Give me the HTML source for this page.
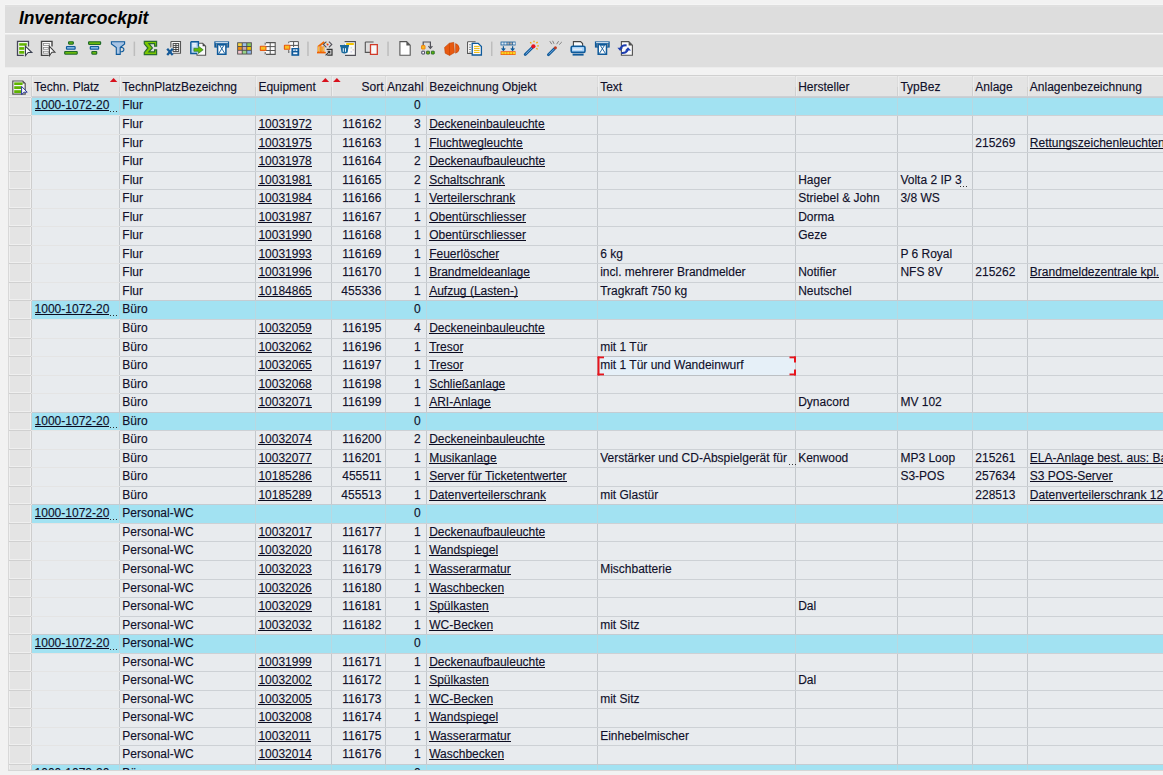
<!DOCTYPE html>
<html><head><meta charset="utf-8"><style>
html,body{margin:0;padding:0;}
body{width:1163px;height:775px;overflow:hidden;position:relative;background:#f2f2f2;font-family:"Liberation Sans",sans-serif;}
.t{position:absolute;font-size:12px;line-height:14px;white-space:nowrap;color:#10102a;-webkit-text-stroke:0.25px rgba(16,16,42,0.6);}
.u{background:linear-gradient(#0c0c20,#0c0c20) 0 12px/100% 1px no-repeat;}
.c1{width:189px;overflow:hidden;}
.dot{position:absolute;width:1px;height:1px;background:#333;}
#title{position:absolute;left:19px;top:8px;font-size:17.5px;line-height:20px;font-weight:bold;font-style:italic;color:#000;white-space:nowrap;}
.ic{position:absolute;width:16px;height:16px;}
#clip{position:absolute;left:0;top:0;width:1163px;height:770px;overflow:hidden;}
</style></head><body>
<svg width="1163" height="775" style="position:absolute;left:0;top:0"><rect x="0" y="0" width="1163" height="775" fill="#f2f2f2"/><rect x="5" y="4.6" width="1158" height="0.7" fill="#fbfbfb"/><rect x="5" y="5.3" width="1158" height="0.9" fill="#d6d6d6"/><rect x="5" y="6.2" width="1158" height="27" fill="#dddddd"/><rect x="5" y="33.2" width="1158" height="1.3" fill="#f9f9f9"/><rect x="5" y="34.5" width="1158" height="32.8" fill="#dedede"/><rect x="8" y="75" width="1155" height="695" fill="#e4e4e4"/><rect x="8" y="75" width="1155" height="1" fill="#d0d0d0"/><rect x="8" y="75" width="1" height="695" fill="#d8d8d8"/><rect x="9" y="76" width="1154" height="1" fill="#ececec"/><rect x="31" y="76" width="1" height="11" fill="#dcdcdc"/><rect x="31" y="87" width="1" height="9" fill="#d0d0d0"/><rect x="32" y="76" width="1" height="20" fill="#ededed"/><rect x="119" y="76" width="1" height="11" fill="#dcdcdc"/><rect x="119" y="87" width="1" height="9" fill="#d0d0d0"/><rect x="120" y="76" width="1" height="20" fill="#ededed"/><rect x="255" y="76" width="1" height="11" fill="#dcdcdc"/><rect x="255" y="87" width="1" height="9" fill="#d0d0d0"/><rect x="256" y="76" width="1" height="20" fill="#ededed"/><rect x="331" y="76" width="1" height="11" fill="#dcdcdc"/><rect x="331" y="87" width="1" height="9" fill="#d0d0d0"/><rect x="332" y="76" width="1" height="20" fill="#ededed"/><rect x="385" y="76" width="1" height="11" fill="#dcdcdc"/><rect x="385" y="87" width="1" height="9" fill="#d0d0d0"/><rect x="386" y="76" width="1" height="20" fill="#ededed"/><rect x="426" y="76" width="1" height="11" fill="#dcdcdc"/><rect x="426" y="87" width="1" height="9" fill="#d0d0d0"/><rect x="427" y="76" width="1" height="20" fill="#ededed"/><rect x="597" y="76" width="1" height="11" fill="#dcdcdc"/><rect x="597" y="87" width="1" height="9" fill="#d0d0d0"/><rect x="598" y="76" width="1" height="20" fill="#ededed"/><rect x="795" y="76" width="1" height="11" fill="#dcdcdc"/><rect x="795" y="87" width="1" height="9" fill="#d0d0d0"/><rect x="796" y="76" width="1" height="20" fill="#ededed"/><rect x="897" y="76" width="1" height="11" fill="#dcdcdc"/><rect x="897" y="87" width="1" height="9" fill="#d0d0d0"/><rect x="898" y="76" width="1" height="20" fill="#ededed"/><rect x="972" y="76" width="1" height="11" fill="#dcdcdc"/><rect x="972" y="87" width="1" height="9" fill="#d0d0d0"/><rect x="973" y="76" width="1" height="20" fill="#ededed"/><rect x="1027" y="76" width="1" height="11" fill="#dcdcdc"/><rect x="1027" y="87" width="1" height="9" fill="#d0d0d0"/><rect x="1028" y="76" width="1" height="20" fill="#ededed"/><rect x="9" y="96" width="1154" height="1" fill="#ccd0d4"/><rect x="32" y="98" width="1131" height="17" fill="#a2e2f2"/><rect x="9" y="97" width="22" height="1" fill="#d0d0d0"/><rect x="9" y="96" width="22" height="1" fill="#efefef"/><rect x="9" y="98" width="1" height="16" fill="#efefef"/><rect x="30" y="98" width="1" height="16" fill="#efefef"/><rect x="32" y="97" width="1131" height="1" fill="#c4ccd2"/><rect x="31" y="98" width="1" height="17" fill="#cdcdcd"/><rect x="119" y="98" width="1" height="17" fill="#b8d8e2"/><rect x="255" y="98" width="1" height="17" fill="#b8d8e2"/><rect x="331" y="98" width="1" height="17" fill="#b8d8e2"/><rect x="385" y="98" width="1" height="17" fill="#b8d8e2"/><rect x="426" y="98" width="1" height="17" fill="#b8d8e2"/><rect x="597" y="98" width="1" height="17" fill="#b8d8e2"/><rect x="795" y="98" width="1" height="17" fill="#b8d8e2"/><rect x="897" y="98" width="1" height="17" fill="#b8d8e2"/><rect x="972" y="98" width="1" height="17" fill="#b8d8e2"/><rect x="1027" y="98" width="1" height="17" fill="#b8d8e2"/><rect x="32" y="116" width="1131" height="18" fill="#e8ebee"/><rect x="9" y="115" width="22" height="1" fill="#d0d0d0"/><rect x="9" y="114" width="22" height="1" fill="#efefef"/><rect x="9" y="116" width="1" height="17" fill="#efefef"/><rect x="30" y="116" width="1" height="17" fill="#efefef"/><rect x="120" y="115" width="1043" height="1" fill="#cdd1d5"/><rect x="31" y="116" width="1" height="18" fill="#cdcdcd"/><rect x="119" y="116" width="1" height="18" fill="#c4c8cc"/><rect x="255" y="116" width="1" height="18" fill="#c4c8cc"/><rect x="331" y="116" width="1" height="18" fill="#c4c8cc"/><rect x="385" y="116" width="1" height="18" fill="#c4c8cc"/><rect x="426" y="116" width="1" height="18" fill="#c4c8cc"/><rect x="597" y="116" width="1" height="18" fill="#c4c8cc"/><rect x="795" y="116" width="1" height="18" fill="#c4c8cc"/><rect x="897" y="116" width="1" height="18" fill="#c4c8cc"/><rect x="972" y="116" width="1" height="18" fill="#c4c8cc"/><rect x="1027" y="116" width="1" height="18" fill="#c4c8cc"/><rect x="32" y="135" width="1131" height="17" fill="#e8ebee"/><rect x="9" y="134" width="22" height="1" fill="#d0d0d0"/><rect x="9" y="133" width="22" height="1" fill="#efefef"/><rect x="9" y="135" width="1" height="16" fill="#efefef"/><rect x="30" y="135" width="1" height="16" fill="#efefef"/><rect x="120" y="134" width="1043" height="1" fill="#cdd1d5"/><rect x="31" y="135" width="1" height="17" fill="#cdcdcd"/><rect x="119" y="135" width="1" height="17" fill="#c4c8cc"/><rect x="255" y="135" width="1" height="17" fill="#c4c8cc"/><rect x="331" y="135" width="1" height="17" fill="#c4c8cc"/><rect x="385" y="135" width="1" height="17" fill="#c4c8cc"/><rect x="426" y="135" width="1" height="17" fill="#c4c8cc"/><rect x="597" y="135" width="1" height="17" fill="#c4c8cc"/><rect x="795" y="135" width="1" height="17" fill="#c4c8cc"/><rect x="897" y="135" width="1" height="17" fill="#c4c8cc"/><rect x="972" y="135" width="1" height="17" fill="#c4c8cc"/><rect x="1027" y="135" width="1" height="17" fill="#c4c8cc"/><rect x="32" y="153" width="1131" height="18" fill="#e8ebee"/><rect x="9" y="152" width="22" height="1" fill="#d0d0d0"/><rect x="9" y="151" width="22" height="1" fill="#efefef"/><rect x="9" y="153" width="1" height="17" fill="#efefef"/><rect x="30" y="153" width="1" height="17" fill="#efefef"/><rect x="120" y="152" width="1043" height="1" fill="#cdd1d5"/><rect x="31" y="153" width="1" height="18" fill="#cdcdcd"/><rect x="119" y="153" width="1" height="18" fill="#c4c8cc"/><rect x="255" y="153" width="1" height="18" fill="#c4c8cc"/><rect x="331" y="153" width="1" height="18" fill="#c4c8cc"/><rect x="385" y="153" width="1" height="18" fill="#c4c8cc"/><rect x="426" y="153" width="1" height="18" fill="#c4c8cc"/><rect x="597" y="153" width="1" height="18" fill="#c4c8cc"/><rect x="795" y="153" width="1" height="18" fill="#c4c8cc"/><rect x="897" y="153" width="1" height="18" fill="#c4c8cc"/><rect x="972" y="153" width="1" height="18" fill="#c4c8cc"/><rect x="1027" y="153" width="1" height="18" fill="#c4c8cc"/><rect x="32" y="172" width="1131" height="17" fill="#e8ebee"/><rect x="9" y="171" width="22" height="1" fill="#d0d0d0"/><rect x="9" y="170" width="22" height="1" fill="#efefef"/><rect x="9" y="172" width="1" height="16" fill="#efefef"/><rect x="30" y="172" width="1" height="16" fill="#efefef"/><rect x="120" y="171" width="1043" height="1" fill="#cdd1d5"/><rect x="31" y="172" width="1" height="17" fill="#cdcdcd"/><rect x="119" y="172" width="1" height="17" fill="#c4c8cc"/><rect x="255" y="172" width="1" height="17" fill="#c4c8cc"/><rect x="331" y="172" width="1" height="17" fill="#c4c8cc"/><rect x="385" y="172" width="1" height="17" fill="#c4c8cc"/><rect x="426" y="172" width="1" height="17" fill="#c4c8cc"/><rect x="597" y="172" width="1" height="17" fill="#c4c8cc"/><rect x="795" y="172" width="1" height="17" fill="#c4c8cc"/><rect x="897" y="172" width="1" height="17" fill="#c4c8cc"/><rect x="972" y="172" width="1" height="17" fill="#c4c8cc"/><rect x="1027" y="172" width="1" height="17" fill="#c4c8cc"/><rect x="32" y="190" width="1131" height="18" fill="#e8ebee"/><rect x="9" y="189" width="22" height="1" fill="#d0d0d0"/><rect x="9" y="188" width="22" height="1" fill="#efefef"/><rect x="9" y="190" width="1" height="17" fill="#efefef"/><rect x="30" y="190" width="1" height="17" fill="#efefef"/><rect x="120" y="189" width="1043" height="1" fill="#cdd1d5"/><rect x="31" y="190" width="1" height="18" fill="#cdcdcd"/><rect x="119" y="190" width="1" height="18" fill="#c4c8cc"/><rect x="255" y="190" width="1" height="18" fill="#c4c8cc"/><rect x="331" y="190" width="1" height="18" fill="#c4c8cc"/><rect x="385" y="190" width="1" height="18" fill="#c4c8cc"/><rect x="426" y="190" width="1" height="18" fill="#c4c8cc"/><rect x="597" y="190" width="1" height="18" fill="#c4c8cc"/><rect x="795" y="190" width="1" height="18" fill="#c4c8cc"/><rect x="897" y="190" width="1" height="18" fill="#c4c8cc"/><rect x="972" y="190" width="1" height="18" fill="#c4c8cc"/><rect x="1027" y="190" width="1" height="18" fill="#c4c8cc"/><rect x="32" y="209" width="1131" height="17" fill="#e8ebee"/><rect x="9" y="208" width="22" height="1" fill="#d0d0d0"/><rect x="9" y="207" width="22" height="1" fill="#efefef"/><rect x="9" y="209" width="1" height="16" fill="#efefef"/><rect x="30" y="209" width="1" height="16" fill="#efefef"/><rect x="120" y="208" width="1043" height="1" fill="#cdd1d5"/><rect x="31" y="209" width="1" height="17" fill="#cdcdcd"/><rect x="119" y="209" width="1" height="17" fill="#c4c8cc"/><rect x="255" y="209" width="1" height="17" fill="#c4c8cc"/><rect x="331" y="209" width="1" height="17" fill="#c4c8cc"/><rect x="385" y="209" width="1" height="17" fill="#c4c8cc"/><rect x="426" y="209" width="1" height="17" fill="#c4c8cc"/><rect x="597" y="209" width="1" height="17" fill="#c4c8cc"/><rect x="795" y="209" width="1" height="17" fill="#c4c8cc"/><rect x="897" y="209" width="1" height="17" fill="#c4c8cc"/><rect x="972" y="209" width="1" height="17" fill="#c4c8cc"/><rect x="1027" y="209" width="1" height="17" fill="#c4c8cc"/><rect x="32" y="227" width="1131" height="18" fill="#e8ebee"/><rect x="9" y="226" width="22" height="1" fill="#d0d0d0"/><rect x="9" y="225" width="22" height="1" fill="#efefef"/><rect x="9" y="227" width="1" height="17" fill="#efefef"/><rect x="30" y="227" width="1" height="17" fill="#efefef"/><rect x="120" y="226" width="1043" height="1" fill="#cdd1d5"/><rect x="31" y="227" width="1" height="18" fill="#cdcdcd"/><rect x="119" y="227" width="1" height="18" fill="#c4c8cc"/><rect x="255" y="227" width="1" height="18" fill="#c4c8cc"/><rect x="331" y="227" width="1" height="18" fill="#c4c8cc"/><rect x="385" y="227" width="1" height="18" fill="#c4c8cc"/><rect x="426" y="227" width="1" height="18" fill="#c4c8cc"/><rect x="597" y="227" width="1" height="18" fill="#c4c8cc"/><rect x="795" y="227" width="1" height="18" fill="#c4c8cc"/><rect x="897" y="227" width="1" height="18" fill="#c4c8cc"/><rect x="972" y="227" width="1" height="18" fill="#c4c8cc"/><rect x="1027" y="227" width="1" height="18" fill="#c4c8cc"/><rect x="32" y="246" width="1131" height="17" fill="#e8ebee"/><rect x="9" y="245" width="22" height="1" fill="#d0d0d0"/><rect x="9" y="244" width="22" height="1" fill="#efefef"/><rect x="9" y="246" width="1" height="16" fill="#efefef"/><rect x="30" y="246" width="1" height="16" fill="#efefef"/><rect x="120" y="245" width="1043" height="1" fill="#cdd1d5"/><rect x="31" y="246" width="1" height="17" fill="#cdcdcd"/><rect x="119" y="246" width="1" height="17" fill="#c4c8cc"/><rect x="255" y="246" width="1" height="17" fill="#c4c8cc"/><rect x="331" y="246" width="1" height="17" fill="#c4c8cc"/><rect x="385" y="246" width="1" height="17" fill="#c4c8cc"/><rect x="426" y="246" width="1" height="17" fill="#c4c8cc"/><rect x="597" y="246" width="1" height="17" fill="#c4c8cc"/><rect x="795" y="246" width="1" height="17" fill="#c4c8cc"/><rect x="897" y="246" width="1" height="17" fill="#c4c8cc"/><rect x="972" y="246" width="1" height="17" fill="#c4c8cc"/><rect x="1027" y="246" width="1" height="17" fill="#c4c8cc"/><rect x="32" y="264" width="1131" height="18" fill="#e8ebee"/><rect x="9" y="263" width="22" height="1" fill="#d0d0d0"/><rect x="9" y="262" width="22" height="1" fill="#efefef"/><rect x="9" y="264" width="1" height="17" fill="#efefef"/><rect x="30" y="264" width="1" height="17" fill="#efefef"/><rect x="120" y="263" width="1043" height="1" fill="#cdd1d5"/><rect x="31" y="264" width="1" height="18" fill="#cdcdcd"/><rect x="119" y="264" width="1" height="18" fill="#c4c8cc"/><rect x="255" y="264" width="1" height="18" fill="#c4c8cc"/><rect x="331" y="264" width="1" height="18" fill="#c4c8cc"/><rect x="385" y="264" width="1" height="18" fill="#c4c8cc"/><rect x="426" y="264" width="1" height="18" fill="#c4c8cc"/><rect x="597" y="264" width="1" height="18" fill="#c4c8cc"/><rect x="795" y="264" width="1" height="18" fill="#c4c8cc"/><rect x="897" y="264" width="1" height="18" fill="#c4c8cc"/><rect x="972" y="264" width="1" height="18" fill="#c4c8cc"/><rect x="1027" y="264" width="1" height="18" fill="#c4c8cc"/><rect x="32" y="283" width="1131" height="17" fill="#e8ebee"/><rect x="9" y="282" width="22" height="1" fill="#d0d0d0"/><rect x="9" y="281" width="22" height="1" fill="#efefef"/><rect x="9" y="283" width="1" height="16" fill="#efefef"/><rect x="30" y="283" width="1" height="16" fill="#efefef"/><rect x="120" y="282" width="1043" height="1" fill="#cdd1d5"/><rect x="31" y="283" width="1" height="17" fill="#cdcdcd"/><rect x="119" y="283" width="1" height="17" fill="#c4c8cc"/><rect x="255" y="283" width="1" height="17" fill="#c4c8cc"/><rect x="331" y="283" width="1" height="17" fill="#c4c8cc"/><rect x="385" y="283" width="1" height="17" fill="#c4c8cc"/><rect x="426" y="283" width="1" height="17" fill="#c4c8cc"/><rect x="597" y="283" width="1" height="17" fill="#c4c8cc"/><rect x="795" y="283" width="1" height="17" fill="#c4c8cc"/><rect x="897" y="283" width="1" height="17" fill="#c4c8cc"/><rect x="972" y="283" width="1" height="17" fill="#c4c8cc"/><rect x="1027" y="283" width="1" height="17" fill="#c4c8cc"/><rect x="32" y="301" width="1131" height="18" fill="#a2e2f2"/><rect x="9" y="300" width="22" height="1" fill="#d0d0d0"/><rect x="9" y="299" width="22" height="1" fill="#efefef"/><rect x="9" y="301" width="1" height="17" fill="#efefef"/><rect x="30" y="301" width="1" height="17" fill="#efefef"/><rect x="32" y="300" width="1131" height="1" fill="#c4ccd2"/><rect x="31" y="301" width="1" height="18" fill="#cdcdcd"/><rect x="119" y="301" width="1" height="18" fill="#b8d8e2"/><rect x="255" y="301" width="1" height="18" fill="#b8d8e2"/><rect x="331" y="301" width="1" height="18" fill="#b8d8e2"/><rect x="385" y="301" width="1" height="18" fill="#b8d8e2"/><rect x="426" y="301" width="1" height="18" fill="#b8d8e2"/><rect x="597" y="301" width="1" height="18" fill="#b8d8e2"/><rect x="795" y="301" width="1" height="18" fill="#b8d8e2"/><rect x="897" y="301" width="1" height="18" fill="#b8d8e2"/><rect x="972" y="301" width="1" height="18" fill="#b8d8e2"/><rect x="1027" y="301" width="1" height="18" fill="#b8d8e2"/><rect x="32" y="320" width="1131" height="18" fill="#e8ebee"/><rect x="9" y="319" width="22" height="1" fill="#d0d0d0"/><rect x="9" y="318" width="22" height="1" fill="#efefef"/><rect x="9" y="320" width="1" height="17" fill="#efefef"/><rect x="30" y="320" width="1" height="17" fill="#efefef"/><rect x="120" y="319" width="1043" height="1" fill="#cdd1d5"/><rect x="31" y="320" width="1" height="18" fill="#cdcdcd"/><rect x="119" y="320" width="1" height="18" fill="#c4c8cc"/><rect x="255" y="320" width="1" height="18" fill="#c4c8cc"/><rect x="331" y="320" width="1" height="18" fill="#c4c8cc"/><rect x="385" y="320" width="1" height="18" fill="#c4c8cc"/><rect x="426" y="320" width="1" height="18" fill="#c4c8cc"/><rect x="597" y="320" width="1" height="18" fill="#c4c8cc"/><rect x="795" y="320" width="1" height="18" fill="#c4c8cc"/><rect x="897" y="320" width="1" height="18" fill="#c4c8cc"/><rect x="972" y="320" width="1" height="18" fill="#c4c8cc"/><rect x="1027" y="320" width="1" height="18" fill="#c4c8cc"/><rect x="32" y="339" width="1131" height="17" fill="#e8ebee"/><rect x="9" y="338" width="22" height="1" fill="#d0d0d0"/><rect x="9" y="337" width="22" height="1" fill="#efefef"/><rect x="9" y="339" width="1" height="16" fill="#efefef"/><rect x="30" y="339" width="1" height="16" fill="#efefef"/><rect x="120" y="338" width="1043" height="1" fill="#cdd1d5"/><rect x="31" y="339" width="1" height="17" fill="#cdcdcd"/><rect x="119" y="339" width="1" height="17" fill="#c4c8cc"/><rect x="255" y="339" width="1" height="17" fill="#c4c8cc"/><rect x="331" y="339" width="1" height="17" fill="#c4c8cc"/><rect x="385" y="339" width="1" height="17" fill="#c4c8cc"/><rect x="426" y="339" width="1" height="17" fill="#c4c8cc"/><rect x="597" y="339" width="1" height="17" fill="#c4c8cc"/><rect x="795" y="339" width="1" height="17" fill="#c4c8cc"/><rect x="897" y="339" width="1" height="17" fill="#c4c8cc"/><rect x="972" y="339" width="1" height="17" fill="#c4c8cc"/><rect x="1027" y="339" width="1" height="17" fill="#c4c8cc"/><rect x="32" y="357" width="1131" height="18" fill="#e8ebee"/><rect x="9" y="356" width="22" height="1" fill="#d0d0d0"/><rect x="9" y="355" width="22" height="1" fill="#efefef"/><rect x="9" y="357" width="1" height="17" fill="#efefef"/><rect x="30" y="357" width="1" height="17" fill="#efefef"/><rect x="120" y="356" width="1043" height="1" fill="#cdd1d5"/><rect x="31" y="357" width="1" height="18" fill="#cdcdcd"/><rect x="119" y="357" width="1" height="18" fill="#c4c8cc"/><rect x="255" y="357" width="1" height="18" fill="#c4c8cc"/><rect x="331" y="357" width="1" height="18" fill="#c4c8cc"/><rect x="385" y="357" width="1" height="18" fill="#c4c8cc"/><rect x="426" y="357" width="1" height="18" fill="#c4c8cc"/><rect x="597" y="357" width="1" height="18" fill="#c4c8cc"/><rect x="795" y="357" width="1" height="18" fill="#c4c8cc"/><rect x="897" y="357" width="1" height="18" fill="#c4c8cc"/><rect x="972" y="357" width="1" height="18" fill="#c4c8cc"/><rect x="1027" y="357" width="1" height="18" fill="#c4c8cc"/><rect x="32" y="376" width="1131" height="17" fill="#e8ebee"/><rect x="9" y="375" width="22" height="1" fill="#d0d0d0"/><rect x="9" y="374" width="22" height="1" fill="#efefef"/><rect x="9" y="376" width="1" height="16" fill="#efefef"/><rect x="30" y="376" width="1" height="16" fill="#efefef"/><rect x="120" y="375" width="1043" height="1" fill="#cdd1d5"/><rect x="31" y="376" width="1" height="17" fill="#cdcdcd"/><rect x="119" y="376" width="1" height="17" fill="#c4c8cc"/><rect x="255" y="376" width="1" height="17" fill="#c4c8cc"/><rect x="331" y="376" width="1" height="17" fill="#c4c8cc"/><rect x="385" y="376" width="1" height="17" fill="#c4c8cc"/><rect x="426" y="376" width="1" height="17" fill="#c4c8cc"/><rect x="597" y="376" width="1" height="17" fill="#c4c8cc"/><rect x="795" y="376" width="1" height="17" fill="#c4c8cc"/><rect x="897" y="376" width="1" height="17" fill="#c4c8cc"/><rect x="972" y="376" width="1" height="17" fill="#c4c8cc"/><rect x="1027" y="376" width="1" height="17" fill="#c4c8cc"/><rect x="32" y="394" width="1131" height="18" fill="#e8ebee"/><rect x="9" y="393" width="22" height="1" fill="#d0d0d0"/><rect x="9" y="392" width="22" height="1" fill="#efefef"/><rect x="9" y="394" width="1" height="17" fill="#efefef"/><rect x="30" y="394" width="1" height="17" fill="#efefef"/><rect x="120" y="393" width="1043" height="1" fill="#cdd1d5"/><rect x="31" y="394" width="1" height="18" fill="#cdcdcd"/><rect x="119" y="394" width="1" height="18" fill="#c4c8cc"/><rect x="255" y="394" width="1" height="18" fill="#c4c8cc"/><rect x="331" y="394" width="1" height="18" fill="#c4c8cc"/><rect x="385" y="394" width="1" height="18" fill="#c4c8cc"/><rect x="426" y="394" width="1" height="18" fill="#c4c8cc"/><rect x="597" y="394" width="1" height="18" fill="#c4c8cc"/><rect x="795" y="394" width="1" height="18" fill="#c4c8cc"/><rect x="897" y="394" width="1" height="18" fill="#c4c8cc"/><rect x="972" y="394" width="1" height="18" fill="#c4c8cc"/><rect x="1027" y="394" width="1" height="18" fill="#c4c8cc"/><rect x="32" y="413" width="1131" height="17" fill="#a2e2f2"/><rect x="9" y="412" width="22" height="1" fill="#d0d0d0"/><rect x="9" y="411" width="22" height="1" fill="#efefef"/><rect x="9" y="413" width="1" height="16" fill="#efefef"/><rect x="30" y="413" width="1" height="16" fill="#efefef"/><rect x="32" y="412" width="1131" height="1" fill="#c4ccd2"/><rect x="31" y="413" width="1" height="17" fill="#cdcdcd"/><rect x="119" y="413" width="1" height="17" fill="#b8d8e2"/><rect x="255" y="413" width="1" height="17" fill="#b8d8e2"/><rect x="331" y="413" width="1" height="17" fill="#b8d8e2"/><rect x="385" y="413" width="1" height="17" fill="#b8d8e2"/><rect x="426" y="413" width="1" height="17" fill="#b8d8e2"/><rect x="597" y="413" width="1" height="17" fill="#b8d8e2"/><rect x="795" y="413" width="1" height="17" fill="#b8d8e2"/><rect x="897" y="413" width="1" height="17" fill="#b8d8e2"/><rect x="972" y="413" width="1" height="17" fill="#b8d8e2"/><rect x="1027" y="413" width="1" height="17" fill="#b8d8e2"/><rect x="32" y="431" width="1131" height="18" fill="#e8ebee"/><rect x="9" y="430" width="22" height="1" fill="#d0d0d0"/><rect x="9" y="429" width="22" height="1" fill="#efefef"/><rect x="9" y="431" width="1" height="17" fill="#efefef"/><rect x="30" y="431" width="1" height="17" fill="#efefef"/><rect x="120" y="430" width="1043" height="1" fill="#cdd1d5"/><rect x="31" y="431" width="1" height="18" fill="#cdcdcd"/><rect x="119" y="431" width="1" height="18" fill="#c4c8cc"/><rect x="255" y="431" width="1" height="18" fill="#c4c8cc"/><rect x="331" y="431" width="1" height="18" fill="#c4c8cc"/><rect x="385" y="431" width="1" height="18" fill="#c4c8cc"/><rect x="426" y="431" width="1" height="18" fill="#c4c8cc"/><rect x="597" y="431" width="1" height="18" fill="#c4c8cc"/><rect x="795" y="431" width="1" height="18" fill="#c4c8cc"/><rect x="897" y="431" width="1" height="18" fill="#c4c8cc"/><rect x="972" y="431" width="1" height="18" fill="#c4c8cc"/><rect x="1027" y="431" width="1" height="18" fill="#c4c8cc"/><rect x="32" y="450" width="1131" height="17" fill="#e8ebee"/><rect x="9" y="449" width="22" height="1" fill="#d0d0d0"/><rect x="9" y="448" width="22" height="1" fill="#efefef"/><rect x="9" y="450" width="1" height="16" fill="#efefef"/><rect x="30" y="450" width="1" height="16" fill="#efefef"/><rect x="120" y="449" width="1043" height="1" fill="#cdd1d5"/><rect x="31" y="450" width="1" height="17" fill="#cdcdcd"/><rect x="119" y="450" width="1" height="17" fill="#c4c8cc"/><rect x="255" y="450" width="1" height="17" fill="#c4c8cc"/><rect x="331" y="450" width="1" height="17" fill="#c4c8cc"/><rect x="385" y="450" width="1" height="17" fill="#c4c8cc"/><rect x="426" y="450" width="1" height="17" fill="#c4c8cc"/><rect x="597" y="450" width="1" height="17" fill="#c4c8cc"/><rect x="795" y="450" width="1" height="17" fill="#c4c8cc"/><rect x="897" y="450" width="1" height="17" fill="#c4c8cc"/><rect x="972" y="450" width="1" height="17" fill="#c4c8cc"/><rect x="1027" y="450" width="1" height="17" fill="#c4c8cc"/><rect x="32" y="468" width="1131" height="18" fill="#e8ebee"/><rect x="9" y="467" width="22" height="1" fill="#d0d0d0"/><rect x="9" y="466" width="22" height="1" fill="#efefef"/><rect x="9" y="468" width="1" height="17" fill="#efefef"/><rect x="30" y="468" width="1" height="17" fill="#efefef"/><rect x="120" y="467" width="1043" height="1" fill="#cdd1d5"/><rect x="31" y="468" width="1" height="18" fill="#cdcdcd"/><rect x="119" y="468" width="1" height="18" fill="#c4c8cc"/><rect x="255" y="468" width="1" height="18" fill="#c4c8cc"/><rect x="331" y="468" width="1" height="18" fill="#c4c8cc"/><rect x="385" y="468" width="1" height="18" fill="#c4c8cc"/><rect x="426" y="468" width="1" height="18" fill="#c4c8cc"/><rect x="597" y="468" width="1" height="18" fill="#c4c8cc"/><rect x="795" y="468" width="1" height="18" fill="#c4c8cc"/><rect x="897" y="468" width="1" height="18" fill="#c4c8cc"/><rect x="972" y="468" width="1" height="18" fill="#c4c8cc"/><rect x="1027" y="468" width="1" height="18" fill="#c4c8cc"/><rect x="32" y="487" width="1131" height="17" fill="#e8ebee"/><rect x="9" y="486" width="22" height="1" fill="#d0d0d0"/><rect x="9" y="485" width="22" height="1" fill="#efefef"/><rect x="9" y="487" width="1" height="16" fill="#efefef"/><rect x="30" y="487" width="1" height="16" fill="#efefef"/><rect x="120" y="486" width="1043" height="1" fill="#cdd1d5"/><rect x="31" y="487" width="1" height="17" fill="#cdcdcd"/><rect x="119" y="487" width="1" height="17" fill="#c4c8cc"/><rect x="255" y="487" width="1" height="17" fill="#c4c8cc"/><rect x="331" y="487" width="1" height="17" fill="#c4c8cc"/><rect x="385" y="487" width="1" height="17" fill="#c4c8cc"/><rect x="426" y="487" width="1" height="17" fill="#c4c8cc"/><rect x="597" y="487" width="1" height="17" fill="#c4c8cc"/><rect x="795" y="487" width="1" height="17" fill="#c4c8cc"/><rect x="897" y="487" width="1" height="17" fill="#c4c8cc"/><rect x="972" y="487" width="1" height="17" fill="#c4c8cc"/><rect x="1027" y="487" width="1" height="17" fill="#c4c8cc"/><rect x="32" y="505" width="1131" height="18" fill="#a2e2f2"/><rect x="9" y="504" width="22" height="1" fill="#d0d0d0"/><rect x="9" y="503" width="22" height="1" fill="#efefef"/><rect x="9" y="505" width="1" height="17" fill="#efefef"/><rect x="30" y="505" width="1" height="17" fill="#efefef"/><rect x="32" y="504" width="1131" height="1" fill="#c4ccd2"/><rect x="31" y="505" width="1" height="18" fill="#cdcdcd"/><rect x="119" y="505" width="1" height="18" fill="#b8d8e2"/><rect x="255" y="505" width="1" height="18" fill="#b8d8e2"/><rect x="331" y="505" width="1" height="18" fill="#b8d8e2"/><rect x="385" y="505" width="1" height="18" fill="#b8d8e2"/><rect x="426" y="505" width="1" height="18" fill="#b8d8e2"/><rect x="597" y="505" width="1" height="18" fill="#b8d8e2"/><rect x="795" y="505" width="1" height="18" fill="#b8d8e2"/><rect x="897" y="505" width="1" height="18" fill="#b8d8e2"/><rect x="972" y="505" width="1" height="18" fill="#b8d8e2"/><rect x="1027" y="505" width="1" height="18" fill="#b8d8e2"/><rect x="32" y="524" width="1131" height="17" fill="#e8ebee"/><rect x="9" y="523" width="22" height="1" fill="#d0d0d0"/><rect x="9" y="522" width="22" height="1" fill="#efefef"/><rect x="9" y="524" width="1" height="16" fill="#efefef"/><rect x="30" y="524" width="1" height="16" fill="#efefef"/><rect x="120" y="523" width="1043" height="1" fill="#cdd1d5"/><rect x="31" y="524" width="1" height="17" fill="#cdcdcd"/><rect x="119" y="524" width="1" height="17" fill="#c4c8cc"/><rect x="255" y="524" width="1" height="17" fill="#c4c8cc"/><rect x="331" y="524" width="1" height="17" fill="#c4c8cc"/><rect x="385" y="524" width="1" height="17" fill="#c4c8cc"/><rect x="426" y="524" width="1" height="17" fill="#c4c8cc"/><rect x="597" y="524" width="1" height="17" fill="#c4c8cc"/><rect x="795" y="524" width="1" height="17" fill="#c4c8cc"/><rect x="897" y="524" width="1" height="17" fill="#c4c8cc"/><rect x="972" y="524" width="1" height="17" fill="#c4c8cc"/><rect x="1027" y="524" width="1" height="17" fill="#c4c8cc"/><rect x="32" y="542" width="1131" height="18" fill="#e8ebee"/><rect x="9" y="541" width="22" height="1" fill="#d0d0d0"/><rect x="9" y="540" width="22" height="1" fill="#efefef"/><rect x="9" y="542" width="1" height="17" fill="#efefef"/><rect x="30" y="542" width="1" height="17" fill="#efefef"/><rect x="120" y="541" width="1043" height="1" fill="#cdd1d5"/><rect x="31" y="542" width="1" height="18" fill="#cdcdcd"/><rect x="119" y="542" width="1" height="18" fill="#c4c8cc"/><rect x="255" y="542" width="1" height="18" fill="#c4c8cc"/><rect x="331" y="542" width="1" height="18" fill="#c4c8cc"/><rect x="385" y="542" width="1" height="18" fill="#c4c8cc"/><rect x="426" y="542" width="1" height="18" fill="#c4c8cc"/><rect x="597" y="542" width="1" height="18" fill="#c4c8cc"/><rect x="795" y="542" width="1" height="18" fill="#c4c8cc"/><rect x="897" y="542" width="1" height="18" fill="#c4c8cc"/><rect x="972" y="542" width="1" height="18" fill="#c4c8cc"/><rect x="1027" y="542" width="1" height="18" fill="#c4c8cc"/><rect x="32" y="561" width="1131" height="18" fill="#e8ebee"/><rect x="9" y="560" width="22" height="1" fill="#d0d0d0"/><rect x="9" y="559" width="22" height="1" fill="#efefef"/><rect x="9" y="561" width="1" height="17" fill="#efefef"/><rect x="30" y="561" width="1" height="17" fill="#efefef"/><rect x="120" y="560" width="1043" height="1" fill="#cdd1d5"/><rect x="31" y="561" width="1" height="18" fill="#cdcdcd"/><rect x="119" y="561" width="1" height="18" fill="#c4c8cc"/><rect x="255" y="561" width="1" height="18" fill="#c4c8cc"/><rect x="331" y="561" width="1" height="18" fill="#c4c8cc"/><rect x="385" y="561" width="1" height="18" fill="#c4c8cc"/><rect x="426" y="561" width="1" height="18" fill="#c4c8cc"/><rect x="597" y="561" width="1" height="18" fill="#c4c8cc"/><rect x="795" y="561" width="1" height="18" fill="#c4c8cc"/><rect x="897" y="561" width="1" height="18" fill="#c4c8cc"/><rect x="972" y="561" width="1" height="18" fill="#c4c8cc"/><rect x="1027" y="561" width="1" height="18" fill="#c4c8cc"/><rect x="32" y="580" width="1131" height="17" fill="#e8ebee"/><rect x="9" y="579" width="22" height="1" fill="#d0d0d0"/><rect x="9" y="578" width="22" height="1" fill="#efefef"/><rect x="9" y="580" width="1" height="16" fill="#efefef"/><rect x="30" y="580" width="1" height="16" fill="#efefef"/><rect x="120" y="579" width="1043" height="1" fill="#cdd1d5"/><rect x="31" y="580" width="1" height="17" fill="#cdcdcd"/><rect x="119" y="580" width="1" height="17" fill="#c4c8cc"/><rect x="255" y="580" width="1" height="17" fill="#c4c8cc"/><rect x="331" y="580" width="1" height="17" fill="#c4c8cc"/><rect x="385" y="580" width="1" height="17" fill="#c4c8cc"/><rect x="426" y="580" width="1" height="17" fill="#c4c8cc"/><rect x="597" y="580" width="1" height="17" fill="#c4c8cc"/><rect x="795" y="580" width="1" height="17" fill="#c4c8cc"/><rect x="897" y="580" width="1" height="17" fill="#c4c8cc"/><rect x="972" y="580" width="1" height="17" fill="#c4c8cc"/><rect x="1027" y="580" width="1" height="17" fill="#c4c8cc"/><rect x="32" y="598" width="1131" height="18" fill="#e8ebee"/><rect x="9" y="597" width="22" height="1" fill="#d0d0d0"/><rect x="9" y="596" width="22" height="1" fill="#efefef"/><rect x="9" y="598" width="1" height="17" fill="#efefef"/><rect x="30" y="598" width="1" height="17" fill="#efefef"/><rect x="120" y="597" width="1043" height="1" fill="#cdd1d5"/><rect x="31" y="598" width="1" height="18" fill="#cdcdcd"/><rect x="119" y="598" width="1" height="18" fill="#c4c8cc"/><rect x="255" y="598" width="1" height="18" fill="#c4c8cc"/><rect x="331" y="598" width="1" height="18" fill="#c4c8cc"/><rect x="385" y="598" width="1" height="18" fill="#c4c8cc"/><rect x="426" y="598" width="1" height="18" fill="#c4c8cc"/><rect x="597" y="598" width="1" height="18" fill="#c4c8cc"/><rect x="795" y="598" width="1" height="18" fill="#c4c8cc"/><rect x="897" y="598" width="1" height="18" fill="#c4c8cc"/><rect x="972" y="598" width="1" height="18" fill="#c4c8cc"/><rect x="1027" y="598" width="1" height="18" fill="#c4c8cc"/><rect x="32" y="617" width="1131" height="17" fill="#e8ebee"/><rect x="9" y="616" width="22" height="1" fill="#d0d0d0"/><rect x="9" y="615" width="22" height="1" fill="#efefef"/><rect x="9" y="617" width="1" height="16" fill="#efefef"/><rect x="30" y="617" width="1" height="16" fill="#efefef"/><rect x="120" y="616" width="1043" height="1" fill="#cdd1d5"/><rect x="31" y="617" width="1" height="17" fill="#cdcdcd"/><rect x="119" y="617" width="1" height="17" fill="#c4c8cc"/><rect x="255" y="617" width="1" height="17" fill="#c4c8cc"/><rect x="331" y="617" width="1" height="17" fill="#c4c8cc"/><rect x="385" y="617" width="1" height="17" fill="#c4c8cc"/><rect x="426" y="617" width="1" height="17" fill="#c4c8cc"/><rect x="597" y="617" width="1" height="17" fill="#c4c8cc"/><rect x="795" y="617" width="1" height="17" fill="#c4c8cc"/><rect x="897" y="617" width="1" height="17" fill="#c4c8cc"/><rect x="972" y="617" width="1" height="17" fill="#c4c8cc"/><rect x="1027" y="617" width="1" height="17" fill="#c4c8cc"/><rect x="32" y="635" width="1131" height="18" fill="#a2e2f2"/><rect x="9" y="634" width="22" height="1" fill="#d0d0d0"/><rect x="9" y="633" width="22" height="1" fill="#efefef"/><rect x="9" y="635" width="1" height="17" fill="#efefef"/><rect x="30" y="635" width="1" height="17" fill="#efefef"/><rect x="32" y="634" width="1131" height="1" fill="#c4ccd2"/><rect x="31" y="635" width="1" height="18" fill="#cdcdcd"/><rect x="119" y="635" width="1" height="18" fill="#b8d8e2"/><rect x="255" y="635" width="1" height="18" fill="#b8d8e2"/><rect x="331" y="635" width="1" height="18" fill="#b8d8e2"/><rect x="385" y="635" width="1" height="18" fill="#b8d8e2"/><rect x="426" y="635" width="1" height="18" fill="#b8d8e2"/><rect x="597" y="635" width="1" height="18" fill="#b8d8e2"/><rect x="795" y="635" width="1" height="18" fill="#b8d8e2"/><rect x="897" y="635" width="1" height="18" fill="#b8d8e2"/><rect x="972" y="635" width="1" height="18" fill="#b8d8e2"/><rect x="1027" y="635" width="1" height="18" fill="#b8d8e2"/><rect x="32" y="654" width="1131" height="17" fill="#e8ebee"/><rect x="9" y="653" width="22" height="1" fill="#d0d0d0"/><rect x="9" y="652" width="22" height="1" fill="#efefef"/><rect x="9" y="654" width="1" height="16" fill="#efefef"/><rect x="30" y="654" width="1" height="16" fill="#efefef"/><rect x="120" y="653" width="1043" height="1" fill="#cdd1d5"/><rect x="31" y="654" width="1" height="17" fill="#cdcdcd"/><rect x="119" y="654" width="1" height="17" fill="#c4c8cc"/><rect x="255" y="654" width="1" height="17" fill="#c4c8cc"/><rect x="331" y="654" width="1" height="17" fill="#c4c8cc"/><rect x="385" y="654" width="1" height="17" fill="#c4c8cc"/><rect x="426" y="654" width="1" height="17" fill="#c4c8cc"/><rect x="597" y="654" width="1" height="17" fill="#c4c8cc"/><rect x="795" y="654" width="1" height="17" fill="#c4c8cc"/><rect x="897" y="654" width="1" height="17" fill="#c4c8cc"/><rect x="972" y="654" width="1" height="17" fill="#c4c8cc"/><rect x="1027" y="654" width="1" height="17" fill="#c4c8cc"/><rect x="32" y="672" width="1131" height="18" fill="#e8ebee"/><rect x="9" y="671" width="22" height="1" fill="#d0d0d0"/><rect x="9" y="670" width="22" height="1" fill="#efefef"/><rect x="9" y="672" width="1" height="17" fill="#efefef"/><rect x="30" y="672" width="1" height="17" fill="#efefef"/><rect x="120" y="671" width="1043" height="1" fill="#cdd1d5"/><rect x="31" y="672" width="1" height="18" fill="#cdcdcd"/><rect x="119" y="672" width="1" height="18" fill="#c4c8cc"/><rect x="255" y="672" width="1" height="18" fill="#c4c8cc"/><rect x="331" y="672" width="1" height="18" fill="#c4c8cc"/><rect x="385" y="672" width="1" height="18" fill="#c4c8cc"/><rect x="426" y="672" width="1" height="18" fill="#c4c8cc"/><rect x="597" y="672" width="1" height="18" fill="#c4c8cc"/><rect x="795" y="672" width="1" height="18" fill="#c4c8cc"/><rect x="897" y="672" width="1" height="18" fill="#c4c8cc"/><rect x="972" y="672" width="1" height="18" fill="#c4c8cc"/><rect x="1027" y="672" width="1" height="18" fill="#c4c8cc"/><rect x="32" y="691" width="1131" height="17" fill="#e8ebee"/><rect x="9" y="690" width="22" height="1" fill="#d0d0d0"/><rect x="9" y="689" width="22" height="1" fill="#efefef"/><rect x="9" y="691" width="1" height="16" fill="#efefef"/><rect x="30" y="691" width="1" height="16" fill="#efefef"/><rect x="120" y="690" width="1043" height="1" fill="#cdd1d5"/><rect x="31" y="691" width="1" height="17" fill="#cdcdcd"/><rect x="119" y="691" width="1" height="17" fill="#c4c8cc"/><rect x="255" y="691" width="1" height="17" fill="#c4c8cc"/><rect x="331" y="691" width="1" height="17" fill="#c4c8cc"/><rect x="385" y="691" width="1" height="17" fill="#c4c8cc"/><rect x="426" y="691" width="1" height="17" fill="#c4c8cc"/><rect x="597" y="691" width="1" height="17" fill="#c4c8cc"/><rect x="795" y="691" width="1" height="17" fill="#c4c8cc"/><rect x="897" y="691" width="1" height="17" fill="#c4c8cc"/><rect x="972" y="691" width="1" height="17" fill="#c4c8cc"/><rect x="1027" y="691" width="1" height="17" fill="#c4c8cc"/><rect x="32" y="709" width="1131" height="18" fill="#e8ebee"/><rect x="9" y="708" width="22" height="1" fill="#d0d0d0"/><rect x="9" y="707" width="22" height="1" fill="#efefef"/><rect x="9" y="709" width="1" height="17" fill="#efefef"/><rect x="30" y="709" width="1" height="17" fill="#efefef"/><rect x="120" y="708" width="1043" height="1" fill="#cdd1d5"/><rect x="31" y="709" width="1" height="18" fill="#cdcdcd"/><rect x="119" y="709" width="1" height="18" fill="#c4c8cc"/><rect x="255" y="709" width="1" height="18" fill="#c4c8cc"/><rect x="331" y="709" width="1" height="18" fill="#c4c8cc"/><rect x="385" y="709" width="1" height="18" fill="#c4c8cc"/><rect x="426" y="709" width="1" height="18" fill="#c4c8cc"/><rect x="597" y="709" width="1" height="18" fill="#c4c8cc"/><rect x="795" y="709" width="1" height="18" fill="#c4c8cc"/><rect x="897" y="709" width="1" height="18" fill="#c4c8cc"/><rect x="972" y="709" width="1" height="18" fill="#c4c8cc"/><rect x="1027" y="709" width="1" height="18" fill="#c4c8cc"/><rect x="32" y="728" width="1131" height="17" fill="#e8ebee"/><rect x="9" y="727" width="22" height="1" fill="#d0d0d0"/><rect x="9" y="726" width="22" height="1" fill="#efefef"/><rect x="9" y="728" width="1" height="16" fill="#efefef"/><rect x="30" y="728" width="1" height="16" fill="#efefef"/><rect x="120" y="727" width="1043" height="1" fill="#cdd1d5"/><rect x="31" y="728" width="1" height="17" fill="#cdcdcd"/><rect x="119" y="728" width="1" height="17" fill="#c4c8cc"/><rect x="255" y="728" width="1" height="17" fill="#c4c8cc"/><rect x="331" y="728" width="1" height="17" fill="#c4c8cc"/><rect x="385" y="728" width="1" height="17" fill="#c4c8cc"/><rect x="426" y="728" width="1" height="17" fill="#c4c8cc"/><rect x="597" y="728" width="1" height="17" fill="#c4c8cc"/><rect x="795" y="728" width="1" height="17" fill="#c4c8cc"/><rect x="897" y="728" width="1" height="17" fill="#c4c8cc"/><rect x="972" y="728" width="1" height="17" fill="#c4c8cc"/><rect x="1027" y="728" width="1" height="17" fill="#c4c8cc"/><rect x="32" y="746" width="1131" height="18" fill="#e8ebee"/><rect x="9" y="745" width="22" height="1" fill="#d0d0d0"/><rect x="9" y="744" width="22" height="1" fill="#efefef"/><rect x="9" y="746" width="1" height="17" fill="#efefef"/><rect x="30" y="746" width="1" height="17" fill="#efefef"/><rect x="120" y="745" width="1043" height="1" fill="#cdd1d5"/><rect x="31" y="746" width="1" height="18" fill="#cdcdcd"/><rect x="119" y="746" width="1" height="18" fill="#c4c8cc"/><rect x="255" y="746" width="1" height="18" fill="#c4c8cc"/><rect x="331" y="746" width="1" height="18" fill="#c4c8cc"/><rect x="385" y="746" width="1" height="18" fill="#c4c8cc"/><rect x="426" y="746" width="1" height="18" fill="#c4c8cc"/><rect x="597" y="746" width="1" height="18" fill="#c4c8cc"/><rect x="795" y="746" width="1" height="18" fill="#c4c8cc"/><rect x="897" y="746" width="1" height="18" fill="#c4c8cc"/><rect x="972" y="746" width="1" height="18" fill="#c4c8cc"/><rect x="1027" y="746" width="1" height="18" fill="#c4c8cc"/><rect x="32" y="765" width="1131" height="5" fill="#a2e2f2"/><rect x="9" y="764" width="22" height="1" fill="#d0d0d0"/><rect x="9" y="763" width="22" height="1" fill="#efefef"/><rect x="9" y="765" width="1" height="4" fill="#efefef"/><rect x="30" y="765" width="1" height="4" fill="#efefef"/><rect x="32" y="764" width="1131" height="1" fill="#c4ccd2"/><rect x="31" y="765" width="1" height="5" fill="#cdcdcd"/><rect x="119" y="765" width="1" height="5" fill="#b8d8e2"/><rect x="255" y="765" width="1" height="5" fill="#b8d8e2"/><rect x="331" y="765" width="1" height="5" fill="#b8d8e2"/><rect x="385" y="765" width="1" height="5" fill="#b8d8e2"/><rect x="426" y="765" width="1" height="5" fill="#b8d8e2"/><rect x="597" y="765" width="1" height="5" fill="#b8d8e2"/><rect x="795" y="765" width="1" height="5" fill="#b8d8e2"/><rect x="897" y="765" width="1" height="5" fill="#b8d8e2"/><rect x="972" y="765" width="1" height="5" fill="#b8d8e2"/><rect x="1027" y="765" width="1" height="5" fill="#b8d8e2"/><rect x="8" y="770" width="1155" height="1" fill="#d6d6d6"/><rect x="598" y="357" width="197" height="18" fill="#e6f0f8"/><rect x="598" y="356" width="197" height="1" fill="#bcc0c4"/><rect x="598" y="375" width="197" height="1" fill="#bcc0c4"/><rect x="597.5" y="356.5" width="2" height="19" fill="#e8141c"/><rect x="597.5" y="356.5" width="6.5" height="1.8" fill="#e8141c"/><rect x="597.5" y="373.5" width="6.5" height="1.8" fill="#e8141c"/><rect x="794" y="356.5" width="2" height="6" fill="#e8141c"/><rect x="794" y="369.5" width="2" height="6" fill="#e8141c"/><rect x="789.5" y="356.5" width="6.5" height="1.8" fill="#e8141c"/><rect x="789.5" y="373.5" width="6.5" height="1.8" fill="#e8141c"/><path d="M109.8 82 L113.55 77.9 L117.3 82 Z" fill="#d8101c"/><path d="M321.6 82 L325.35 77.9 L329.1 82 Z" fill="#d8101c"/><path d="M333.1 82 L336.85 77.9 L340.6 82 Z" fill="#d8101c"/></svg>
<div id="title">Inventarcockpit</div>
<svg width="1163" height="100" style="position:absolute;left:0;top:0"><rect x="18.1" y="42.0" width="10.0" height="13.0" fill="#f2f8ea"/><path d="M23.8 55.3 H17.5 V41.4 H28.5 V46.6" fill="none" stroke="#46465a" stroke-width="1.3"/><rect x="19.2" y="43.2" width="7.6" height="2.5" fill="#62b400"/><rect x="19.2" y="47.1" width="5.1" height="2.7" fill="#62b400"/><rect x="19.2" y="51.0" width="5.1" height="2.7" fill="#62b400"/><path d="M25.4 46.2 L31.8 52.5 L28.2 52.5 L25.5 55.6 Z" fill="#fbfbfb" stroke="#3a4050" stroke-width="1.1"/><rect x="41.9" y="42.0" width="10.0" height="13.0" fill="#fafafa"/><path d="M48.8 55.4 H41.5 V41.4 H52.0 V46.6" fill="none" stroke="#444" stroke-width="1.4"/><rect x="43.5" y="43.5" width="5.8" height="1.9" fill="#fff" stroke="#8a8a8a" stroke-width="0.8"/><rect x="43.5" y="47.4" width="4.8" height="1.9" fill="#fff" stroke="#8a8a8a" stroke-width="0.8"/><rect x="43.5" y="51.3" width="4.8" height="1.9" fill="#fff" stroke="#8a8a8a" stroke-width="0.8"/><path d="M49.3 46.2 L54.9 52.2 L52 52.2 L49.5 55.6 Z" fill="#fbfbfb" stroke="#404040" stroke-width="1.1"/><rect x="68.6" y="41.8" width="4.7" height="2.3" rx="0.5" fill="#84d400" stroke="#1f6a2a" stroke-width="1.2"/><rect x="66.5" y="46.7" width="8.6" height="2.5" rx="0.5" fill="#a8d4fa" stroke="#0f5a9a" stroke-width="1.2"/><rect x="64.7" y="51.6" width="12.5" height="2.5" rx="0.5" fill="#84d400" stroke="#1f6a2a" stroke-width="1.2"/><rect x="88.6" y="41.8" width="12.0" height="2.5" rx="0.5" fill="#84d400" stroke="#1f6a2a" stroke-width="1.2"/><rect x="90.3" y="46.7" width="8.3" height="2.5" rx="0.5" fill="#a8d4fa" stroke="#0f5a9a" stroke-width="1.2"/><rect x="91.9" y="51.6" width="4.8" height="2.5" rx="0.5" fill="#84d400" stroke="#1f6a2a" stroke-width="1.2"/><path d="M111.4 41.7 H124.6 V43.9 L120.2 47.6 V54.4 H116.3 V47.6 L111.4 43.9 Z" fill="#a8c4e4" stroke="#0f5a9a" stroke-width="1.1"/><path d="M120.3 47.2 Q123.9 47.2 123.9 49.4 Q123.9 51.7 120.3 51.7" fill="none" stroke="#0f5a9a" stroke-width="1.1"/><rect x="133.6" y="41.6" width="1.5" height="14.4" fill="#bdbdbd"/><rect x="307.2" y="41.6" width="1.5" height="14.4" fill="#bdbdbd"/><rect x="387.3" y="41.6" width="1.5" height="14.4" fill="#bdbdbd"/><rect x="491.0" y="41.6" width="1.5" height="14.4" fill="#bdbdbd"/><path d="M144.3 41.3 H156.6 V46.2 H154.6 V43.6 H148.9 L152.4 47.9 L148.9 51.8 H154.6 V49.8 H156.6 V54.6 H144.3 V52.4 L147.9 48.0 L144.3 43.8 Z" fill="#7cc800" stroke="#2a6e2e" stroke-width="1.2"/><rect x="170.9" y="41.5" width="9.6" height="11.8" fill="#fafafa"/><path d="M170.9 41.5 H180.5 V53.3 H173 M170.9 41.5 V47.5" fill="none" stroke="#555" stroke-width="1.1"/><rect x="173.1" y="43.6" width="5.6" height="7.8" fill="#fff" stroke="#3a3a3a" stroke-width="0.9"/><path d="M173.1 45.6 H178.7 M173.1 47.5 H178.7 M173.1 49.5 H178.7 M175.9 43.6 V51.4" fill="none" stroke="#3a3a3a" stroke-width="0.9"/><path d="M167.2 48.7 L172.7 55.0 M172.7 48.7 L167.2 55.0" fill="none" stroke="#165a98" stroke-width="2.3"/><path d="M197.0 43.2 H202.6 L205.6 46.2 V55.3 H197.0 Z" fill="#fafafa" stroke="#555" stroke-width="1.1"/><path d="M202.6 43.2 V46.2 H205.6 Z" fill="#444" stroke="none" stroke-width="1"/><rect x="190.8" y="41.7" width="7.6" height="11.8" fill="#bcd8f4"/><path d="M190.8 41.7 H198.4 V46.5 M190.8 41.7 V53.5 H197" fill="none" stroke="#0f5a9a" stroke-width="1.4"/><rect x="192.3" y="43.4" width="3.8" height="1.0" fill="#ffffff"/><rect x="192.3" y="45.4" width="3.8" height="1.0" fill="#ffffff"/><path d="M193.9 48.3 H198.4 V46.2 L203.2 49.8 L198.4 53.4 V51.3 H193.9 Z" fill="#66bb00" stroke="#2f7a30" stroke-width="0.7"/><rect x="214.3" y="41.4" width="14.8" height="6.2" fill="#0f5a9a"/><rect x="215.5" y="42.2" width="12.4" height="1.0" fill="#f0f8ff"/><rect x="216.20000000000002" y="43.9" width="1.2" height="2.8" fill="#9a9a9a"/><rect x="226.4" y="43.9" width="1.2" height="2.8" fill="#9a9a9a"/><path d="M217.60000000000002 44.4 H225.9 V54.3 H217.60000000000002 Z" fill="#fcfcfc" stroke="#0f5a9a" stroke-width="1.5"/><path d="M219.5 45.2 H224.10000000000002 M219.70000000000002 45.4 L224.9 53.6 M223.9 45.4 L218.70000000000002 53.6" fill="none" stroke="#0f5a9a" stroke-width="0.9"/><rect x="594.9000000000001" y="41.4" width="14.8" height="6.2" fill="#0f5a9a"/><rect x="596.1000000000001" y="42.2" width="12.4" height="1.0" fill="#f0f8ff"/><rect x="596.8000000000001" y="43.9" width="1.2" height="2.8" fill="#9a9a9a"/><rect x="607.0000000000001" y="43.9" width="1.2" height="2.8" fill="#9a9a9a"/><path d="M598.2 44.4 H606.5000000000001 V54.3 H598.2 Z" fill="#fcfcfc" stroke="#0f5a9a" stroke-width="1.5"/><path d="M600.1000000000001 45.2 H604.7 M600.3000000000001 45.4 L605.5000000000001 53.6 M604.5000000000001 45.4 L599.3000000000001 53.6" fill="none" stroke="#0f5a9a" stroke-width="0.9"/><rect x="237.2" y="42.3" width="14.6" height="12.2" fill="#4a4a4a"/><rect x="238.1" y="43.199999999999996" width="3.6666666666666665" height="2.8666666666666667" fill="#f4d442"/><rect x="242.66666666666666" y="43.199999999999996" width="3.6666666666666665" height="2.8666666666666667" fill="#9cc0e8"/><rect x="247.23333333333332" y="43.199999999999996" width="3.6666666666666665" height="2.8666666666666667" fill="#88c860"/><rect x="238.1" y="46.96666666666666" width="3.6666666666666665" height="2.8666666666666667" fill="#f08c10"/><rect x="242.66666666666666" y="46.96666666666666" width="3.6666666666666665" height="2.8666666666666667" fill="#c8a8b0"/><rect x="247.23333333333332" y="46.96666666666666" width="3.6666666666666665" height="2.8666666666666667" fill="#f2c400"/><rect x="238.1" y="50.73333333333333" width="3.6666666666666665" height="2.8666666666666667" fill="#f4c4cc"/><rect x="242.66666666666666" y="50.73333333333333" width="3.6666666666666665" height="2.8666666666666667" fill="#98d488"/><rect x="247.23333333333332" y="50.73333333333333" width="3.6666666666666665" height="2.8666666666666667" fill="#8cb4ec"/><rect x="264.8" y="42.6" width="10.6" height="11.8" fill="#fbfbfb"/><path d="M266 42.6 H275.2 V54.4 H266" fill="none" stroke="#555" stroke-width="1.1"/><path d="M270.2 42.6 V54.4 M265.6 46.6 H275.2 M265.6 50.5 H275.2" fill="none" stroke="#555" stroke-width="1"/><path d="M265.2 42.6 V44.8 M265.2 52 V54.4" fill="none" stroke="#555" stroke-width="1"/><rect x="260.3" y="46.2" width="5.6" height="4.2" rx="0.3" fill="#f8c020" stroke="#e85a10" stroke-width="1.1"/><rect x="288.8" y="41.6" width="9.6" height="9.4" fill="#fbfbfb"/><path d="M289.5 41.6 H298.4 V50.5 M293.6 41.6 V47 M288.8 45.4 H298.4" fill="none" stroke="#555" stroke-width="1"/><path d="M288.8 41.6 V43.2 M288.8 50 V53" fill="none" stroke="#555" stroke-width="1"/><rect x="284.4" y="45.3" width="5.4" height="4.0" rx="0.3" fill="#f8c020" stroke="#e85a10" stroke-width="1.1"/><rect x="291.4" y="48.0" width="7.8" height="7.8" fill="#0f5a9a"/><rect x="293.2" y="49.3" width="4.2" height="1.6" fill="#f4f8ff"/><rect x="293.2" y="52.4" width="4.2" height="1.8" fill="#f4f8ff"/><rect x="294.6" y="49.5" width="1.2" height="1.2" fill="#0f5a9a"/><path d="M317.2 46.2 L323.6 41.3 L325 42.8 L320 46.6 Z" fill="#f06800" stroke="none" stroke-width="1"/><rect x="317.6" y="46.4" width="1.9" height="5.6" fill="#f06800"/><rect x="318.20000000000005" y="46.8" width="0.8" height="4.8" fill="#f8d848"/><rect x="320.0" y="46.4" width="1.9" height="5.6" fill="#f06800"/><rect x="320.6" y="46.8" width="0.8" height="4.8" fill="#f8d848"/><rect x="322.4" y="46.4" width="1.9" height="5.6" fill="#f06800"/><rect x="323.0" y="46.8" width="0.8" height="4.8" fill="#f8d848"/><rect x="317.0" y="51.8" width="8.8" height="1.6" fill="#f06000"/><path d="M326.4 41.6 L323.4 44.4 L326.4 47.4 M328.9 41.6 L331.8 44.4 L328.9 47.4" fill="none" stroke="#505058" stroke-width="1.1"/><circle cx="327.6" cy="44.6" r="1.0" fill="#f03018"/><circle cx="327.0" cy="43.6" r="0.7" fill="#f0d030"/><path d="M326.6 49.4 H332.0 V55.2 H327.2" fill="none" stroke="#333" stroke-width="1.2"/><path d="M325.6 55.4 L329.6 51.4 M327.6 51.2 H329.8 V53.4" fill="none" stroke="#333" stroke-width="1.1"/><path d="M344.6 41.6 H355.4 V55.4 H345" fill="#fafafa" stroke="#505058" stroke-width="1.1"/><rect x="346.2" y="43.0" width="7.6" height="2.0" fill="#f4c400"/><rect x="350.5" y="47" width="1.6" height="1.6" fill="#d8e4d8"/><rect x="352.5" y="49" width="1.6" height="1.6" fill="#e4d8d8"/><rect x="350.5" y="51" width="1.6" height="1.6" fill="#d8d8e8"/><path d="M340.3 45.6 H348.8 L347.6 52.6 Q344.6 54.4 341.5 52.6 Z" fill="#1a6a9c" stroke="none" stroke-width="1"/><rect x="340.0" y="45.0" width="9.0" height="1.6" fill="#1a6a9c"/><rect x="344.1" y="44.6" width="0.9" height="0.8" fill="#1a6a9c"/><rect x="342.8" y="48.2" width="1.0" height="3.6" fill="#e8f4ff"/><rect x="345.0" y="48.2" width="1.0" height="3.6" fill="#e8f4ff"/><path d="M365.3 42.0 H373.6 M365.3 42.0 V52.4 H370" fill="none" stroke="#555" stroke-width="1.1"/><rect x="370.5" y="44.6" width="6.8" height="9.8" fill="#f8f8f8"/><path d="M370.5 44.6 H377.3 V54.4 H370.5 Z" fill="none" stroke="#d03a28" stroke-width="1.3"/><path d="M399.9 41.6 H406.6 L410.2 45.2 V55.2 H399.9 Z" fill="#ffffff" stroke="#555" stroke-width="1.1"/><path d="M406.4 41.6 V45.4 H410.2 Z" fill="#555" stroke="none" stroke-width="1"/><rect x="421.6" y="45.6" width="3.4" height="3.4" rx="0.2" fill="#f8c020" stroke="#f08010" stroke-width="1"/><rect x="421.8" y="51.2" width="2.8" height="2.8" rx="0.2" fill="#ffffff" stroke="#40405a" stroke-width="1"/><rect x="426.6" y="51.2" width="2.8" height="2.8" rx="0.2" fill="#88b000" stroke="#2f6a32" stroke-width="1"/><rect x="431.4" y="51.2" width="2.8" height="2.8" rx="0.2" fill="#5cc000" stroke="#2f6a32" stroke-width="1"/><path d="M423.2 45 V42 H430.4 V47.8" fill="none" stroke="#505058" stroke-width="1.2"/><path d="M428.4 46.2 L430.4 48.4 L432.4 46.2" fill="none" stroke="#505058" stroke-width="1.2"/><path d="M444.6 47.4 L449.4 43.2 L453.8 42.4 L454.4 52.6 L449.6 55.4 L445.2 53.2 Z" fill="#e85a10" stroke="#c04000" stroke-width="0.6"/><path d="M449.4 43.2 L449.6 55.4" fill="none" stroke="#c04000" stroke-width="0.6"/><path d="M455.6 43.6 Q459.2 45 459.2 48.6 Q459 52.2 455.6 53.2 Z" fill="#e85a10" stroke="#c04000" stroke-width="0.6"/><path d="M467.6 41.8 H475.6 M467.6 41.8 V53.4 H472" fill="none" stroke="#555" stroke-width="1.1"/><rect x="468.2" y="42.4" width="3.8" height="10.4" fill="#fafafa"/><rect x="469" y="44.4" width="2" height="0.8" fill="#777"/><rect x="469" y="46.8" width="2" height="0.8" fill="#777"/><rect x="469" y="49.2" width="2" height="0.8" fill="#777"/><rect x="469" y="51.6" width="2" height="0.8" fill="#777"/><path d="M472.2 43.4 H478.2 L481.4 46.6 V55 H472.2 Z" fill="#fafafa" stroke="#0f5a9a" stroke-width="1.3"/><rect x="474.0" y="45.9" width="5.6" height="1.0" fill="#f0b800"/><rect x="474.0" y="47.9" width="5.6" height="1.0" fill="#f0b800"/><rect x="474.0" y="49.9" width="5.6" height="1.0" fill="#f0b800"/><rect x="474.0" y="51.9" width="5.6" height="1.0" fill="#f0b800"/><rect x="500.6" y="41.6" width="15" height="3.8" fill="#0f5a9a"/><rect x="501.4" y="42.4" width="2.3" height="2.2" fill="#dce8f4"/><rect x="504.3" y="42.4" width="2.3" height="2.2" fill="#dce8f4"/><rect x="507.2" y="42.4" width="2.3" height="2.2" fill="#b4aca8"/><rect x="510.1" y="42.4" width="2.3" height="2.2" fill="#b4aca8"/><rect x="513.0" y="42.4" width="2.3" height="2.2" fill="#dce8f4"/><path d="M503.4 46.2 V50.2 M501.6 48.4 L503.4 50.4 L505.2 48.4 M512.6 46.2 V50.2 M510.8 48.4 L512.6 50.4 L514.4 48.4" fill="none" stroke="#0f5a9a" stroke-width="1.2"/><rect x="500.6" y="51.2" width="15" height="3.8" fill="#f06010"/><rect x="501.4" y="52.0" width="2.3" height="2.2" fill="#f8d820"/><rect x="504.3" y="52.0" width="2.3" height="2.2" fill="#f8d820"/><rect x="507.2" y="52.0" width="2.3" height="2.2" fill="#f8d820"/><rect x="510.1" y="52.0" width="2.3" height="2.2" fill="#f8d820"/><rect x="513.0" y="52.0" width="2.3" height="2.2" fill="#f8d820"/><path d="M525.2 54.6 L532.4 47.4" fill="none" stroke="#0f5a9a" stroke-width="2.8" stroke-linecap="round"/><path d="M525.6 54.2 L532 47.8" fill="none" stroke="#8ab8e8" stroke-width="0.9"/><circle cx="533.4" cy="46.3" r="2.1" fill="#e8141c"/><path d="M530.2 42.2 L531.4 43.4 M534 40.8 V42.2 M537.6 42 L536.4 43.2 M538.8 45.8 H537.2 M537.6 49.4 L536.4 48.2" fill="none" stroke="#f4a800" stroke-width="1.3"/><path d="M548.4 54.8 L554.4 48.8" fill="none" stroke="#0f5a9a" stroke-width="2.8" stroke-linecap="round"/><path d="M548.8 54.4 L554 49.2" fill="none" stroke="#8ab8e8" stroke-width="0.8"/><circle cx="555.4" cy="47.8" r="1.5" fill="#c03c20"/><path d="M549.8 41.2 L551.8 44.2 M552.6 40.8 L554 43.8 M556.6 44.2 L558.6 41.2 M559.2 44.6 L561.8 42" fill="none" stroke="#666" stroke-width="0.8"/><path d="M573.4 46.2 V41.6 H580.6 L582.6 43.6 V46.2" fill="#fafafa" stroke="#444" stroke-width="1.1"/><rect x="571.2" y="46.2" width="13.8" height="6.2" rx="1.5" fill="#a8d4fa" stroke="#0f5a9a" stroke-width="1.6"/><rect x="573" y="48.4" width="9" height="1.8" fill="#dfeaf6"/><rect x="572.6" y="53.8" width="11" height="1.8" fill="#0f5a9a"/><path d="M621.4 41.6 H628.8 L632.4 45.2 V55.3 H621.4 Z" fill="#fafafa" stroke="#505050" stroke-width="1.1"/><path d="M628.6 41.6 V45.4 H632.4 Z" fill="#505050" stroke="none" stroke-width="1"/><path d="M626.6 45.4 Q622.6 44.6 620.6 48.2" fill="none" stroke="#1c3cb0" stroke-width="2.0"/><path d="M617.4 47.8 L623.0 47.8 L620.2 51.0 Z" fill="#1c3cb0" stroke="none" stroke-width="1"/><path d="M621.4 53.0 Q625.6 53.6 627.8 50.0" fill="none" stroke="#1c3cb0" stroke-width="2.0"/><path d="M625.0 50.4 L631.0 50.4 L628.0 47.2 Z" fill="#1c3cb0" stroke="none" stroke-width="1"/><rect x="13" y="81" width="11.8" height="13.4" fill="#f6f6f6"/><path d="M12.8 81 H22.8 L25.2 83.4 V94.2 H12.8 Z" fill="none" stroke="#555" stroke-width="1.2"/><path d="M22.6 81 V83.6 H25.2 Z" fill="#555" stroke="none" stroke-width="1"/><rect x="14.2" y="82.4" width="8.4" height="2.6" fill="#5fb400"/><rect x="14.2" y="86.2" width="7.2" height="2.8" fill="#5fb400"/><rect x="14.2" y="90.2" width="7.2" height="2.8" fill="#5fb400"/><path d="M21.6 86.4 L27.2 92.2 L23.8 92.2 L21.6 94.8 Z" fill="#fbfbfb" stroke="#2a3a9a" stroke-width="1"/></svg>
<div id="clip">
<div class="t " style="left:34px;top:79.7px">Techn. Platz</div><div class="t " style="left:122.3px;top:79.7px">TechnPlatzBezeichng</div><div class="t " style="left:258.4px;top:79.7px">Equipment</div><div class="t r " style="right:779.4px;top:79.7px">Sort</div><div class="t r " style="right:739.4px;top:79.7px">Anzahl</div><div class="t " style="left:429.2px;top:79.7px">Bezeichnung Objekt</div><div class="t " style="left:600.2px;top:79.7px">Text</div><div class="t " style="left:798.2px;top:79.7px">Hersteller</div><div class="t " style="left:900.4px;top:79.7px">TypBez</div><div class="t " style="left:975.3px;top:79.7px">Anlage</div><div class="t " style="left:1029.8px;top:79.7px">Anlagenbezeichnung</div><div class="t u" style="left:34.6px;top:98px">1000-1072-20</div><div class="t " style="left:122.3px;top:98px">Flur</div><div class="t r " style="right:742.4px;top:98px">0</div><div class="t " style="left:122.3px;top:117px">Flur</div><div class="t u" style="left:258.4px;top:117px">10031972</div><div class="t r " style="right:781.6px;top:117px">116162</div><div class="t r " style="right:742.4px;top:117px">3</div><div class="t u" style="left:429.2px;top:117px">Deckeneinbauleuchte</div><div class="t " style="left:122.3px;top:136px">Flur</div><div class="t u" style="left:258.4px;top:136px">10031975</div><div class="t r " style="right:781.6px;top:136px">116163</div><div class="t r " style="right:742.4px;top:136px">1</div><div class="t u" style="left:429.2px;top:136px">Fluchtwegleuchte</div><div class="t " style="left:975.3px;top:136px">215269</div><div class="t u" style="left:1029.8px;top:136px">Rettungszeichenleuchten</div><div class="t " style="left:122.3px;top:154px">Flur</div><div class="t u" style="left:258.4px;top:154px">10031978</div><div class="t r " style="right:781.6px;top:154px">116164</div><div class="t r " style="right:742.4px;top:154px">2</div><div class="t u" style="left:429.2px;top:154px">Deckenaufbauleuchte</div><div class="t " style="left:122.3px;top:173px">Flur</div><div class="t u" style="left:258.4px;top:173px">10031981</div><div class="t r " style="right:781.6px;top:173px">116165</div><div class="t r " style="right:742.4px;top:173px">2</div><div class="t u" style="left:429.2px;top:173px">Schaltschrank</div><div class="t " style="left:798.2px;top:173px">Hager</div><div class="t " style="left:900.4px;top:173px">Volta 2 IP 3</div><div class="t " style="left:122.3px;top:191px">Flur</div><div class="t u" style="left:258.4px;top:191px">10031984</div><div class="t r " style="right:781.6px;top:191px">116166</div><div class="t r " style="right:742.4px;top:191px">1</div><div class="t u" style="left:429.2px;top:191px">Verteilerschrank</div><div class="t " style="left:798.2px;top:191px">Striebel &amp; John</div><div class="t " style="left:900.4px;top:191px">3/8 WS</div><div class="t " style="left:122.3px;top:210px">Flur</div><div class="t u" style="left:258.4px;top:210px">10031987</div><div class="t r " style="right:781.6px;top:210px">116167</div><div class="t r " style="right:742.4px;top:210px">1</div><div class="t u" style="left:429.2px;top:210px">Obentürschliesser</div><div class="t " style="left:798.2px;top:210px">Dorma</div><div class="t " style="left:122.3px;top:228px">Flur</div><div class="t u" style="left:258.4px;top:228px">10031990</div><div class="t r " style="right:781.6px;top:228px">116168</div><div class="t r " style="right:742.4px;top:228px">1</div><div class="t u" style="left:429.2px;top:228px">Obentürschliesser</div><div class="t " style="left:798.2px;top:228px">Geze</div><div class="t " style="left:122.3px;top:247px">Flur</div><div class="t u" style="left:258.4px;top:247px">10031993</div><div class="t r " style="right:781.6px;top:247px">116169</div><div class="t r " style="right:742.4px;top:247px">1</div><div class="t u" style="left:429.2px;top:247px">Feuerlöscher</div><div class="t " style="left:600.2px;top:247px">6 kg</div><div class="t " style="left:900.4px;top:247px">P 6 Royal</div><div class="t " style="left:122.3px;top:265px">Flur</div><div class="t u" style="left:258.4px;top:265px">10031996</div><div class="t r " style="right:781.6px;top:265px">116170</div><div class="t r " style="right:742.4px;top:265px">1</div><div class="t u" style="left:429.2px;top:265px">Brandmeldeanlage</div><div class="t " style="left:600.2px;top:265px">incl. mehrerer Brandmelder</div><div class="t " style="left:798.2px;top:265px">Notifier</div><div class="t " style="left:900.4px;top:265px">NFS 8V</div><div class="t " style="left:975.3px;top:265px">215262</div><div class="t u" style="left:1029.8px;top:265px">Brandmeldezentrale kpl.</div><div class="t " style="left:122.3px;top:284px">Flur</div><div class="t u" style="left:258.4px;top:284px">10184865</div><div class="t r " style="right:781.6px;top:284px">455336</div><div class="t r " style="right:742.4px;top:284px">1</div><div class="t u" style="left:429.2px;top:284px">Aufzug (Lasten-)</div><div class="t " style="left:600.2px;top:284px">Tragkraft 750 kg</div><div class="t " style="left:798.2px;top:284px">Neutschel</div><div class="t u" style="left:34.6px;top:302px">1000-1072-20</div><div class="t " style="left:122.3px;top:302px">Büro</div><div class="t r " style="right:742.4px;top:302px">0</div><div class="t " style="left:122.3px;top:321px">Büro</div><div class="t u" style="left:258.4px;top:321px">10032059</div><div class="t r " style="right:781.6px;top:321px">116195</div><div class="t r " style="right:742.4px;top:321px">4</div><div class="t u" style="left:429.2px;top:321px">Deckeneinbauleuchte</div><div class="t " style="left:122.3px;top:340px">Büro</div><div class="t u" style="left:258.4px;top:340px">10032062</div><div class="t r " style="right:781.6px;top:340px">116196</div><div class="t r " style="right:742.4px;top:340px">1</div><div class="t u" style="left:429.2px;top:340px">Tresor</div><div class="t " style="left:600.2px;top:340px">mit 1 Tür</div><div class="t " style="left:122.3px;top:358px">Büro</div><div class="t u" style="left:258.4px;top:358px">10032065</div><div class="t r " style="right:781.6px;top:358px">116197</div><div class="t r " style="right:742.4px;top:358px">1</div><div class="t u" style="left:429.2px;top:358px">Tresor</div><div class="t " style="left:600.2px;top:358px">mit 1 Tür und Wandeinwurf</div><div class="t " style="left:122.3px;top:377px">Büro</div><div class="t u" style="left:258.4px;top:377px">10032068</div><div class="t r " style="right:781.6px;top:377px">116198</div><div class="t r " style="right:742.4px;top:377px">1</div><div class="t u" style="left:429.2px;top:377px">Schließanlage</div><div class="t " style="left:122.3px;top:395px">Büro</div><div class="t u" style="left:258.4px;top:395px">10032071</div><div class="t r " style="right:781.6px;top:395px">116199</div><div class="t r " style="right:742.4px;top:395px">1</div><div class="t u" style="left:429.2px;top:395px">ARI-Anlage</div><div class="t " style="left:798.2px;top:395px">Dynacord</div><div class="t " style="left:900.4px;top:395px">MV 102</div><div class="t u" style="left:34.6px;top:414px">1000-1072-20</div><div class="t " style="left:122.3px;top:414px">Büro</div><div class="t r " style="right:742.4px;top:414px">0</div><div class="t " style="left:122.3px;top:432px">Büro</div><div class="t u" style="left:258.4px;top:432px">10032074</div><div class="t r " style="right:781.6px;top:432px">116200</div><div class="t r " style="right:742.4px;top:432px">2</div><div class="t u" style="left:429.2px;top:432px">Deckeneinbauleuchte</div><div class="t " style="left:122.3px;top:451px">Büro</div><div class="t u" style="left:258.4px;top:451px">10032077</div><div class="t r " style="right:781.6px;top:451px">116201</div><div class="t r " style="right:742.4px;top:451px">1</div><div class="t u" style="left:429.2px;top:451px">Musikanlage</div><div class="t c1" style="left:600.2px;top:451px">Verstärker und CD-Abspielgerät für</div><div class="t " style="left:798.2px;top:451px">Kenwood</div><div class="t " style="left:900.4px;top:451px">MP3 Loop</div><div class="t " style="left:975.3px;top:451px">215261</div><div class="t u" style="left:1029.8px;top:451px">ELA-Anlage best. aus: Ba</div><div class="t " style="left:122.3px;top:469px">Büro</div><div class="t u" style="left:258.4px;top:469px">10185286</div><div class="t r " style="right:781.6px;top:469px">455511</div><div class="t r " style="right:742.4px;top:469px">1</div><div class="t u" style="left:429.2px;top:469px">Server für Ticketentwerter</div><div class="t " style="left:900.4px;top:469px">S3-POS</div><div class="t " style="left:975.3px;top:469px">257634</div><div class="t u" style="left:1029.8px;top:469px">S3 POS-Server</div><div class="t " style="left:122.3px;top:488px">Büro</div><div class="t u" style="left:258.4px;top:488px">10185289</div><div class="t r " style="right:781.6px;top:488px">455513</div><div class="t r " style="right:742.4px;top:488px">1</div><div class="t u" style="left:429.2px;top:488px">Datenverteilerschrank</div><div class="t " style="left:600.2px;top:488px">mit Glastür</div><div class="t " style="left:975.3px;top:488px">228513</div><div class="t u" style="left:1029.8px;top:488px">Datenverteilerschrank 12</div><div class="t u" style="left:34.6px;top:506px">1000-1072-20</div><div class="t " style="left:122.3px;top:506px">Personal-WC</div><div class="t r " style="right:742.4px;top:506px">0</div><div class="t " style="left:122.3px;top:525px">Personal-WC</div><div class="t u" style="left:258.4px;top:525px">10032017</div><div class="t r " style="right:781.6px;top:525px">116177</div><div class="t r " style="right:742.4px;top:525px">1</div><div class="t u" style="left:429.2px;top:525px">Deckenaufbauleuchte</div><div class="t " style="left:122.3px;top:543px">Personal-WC</div><div class="t u" style="left:258.4px;top:543px">10032020</div><div class="t r " style="right:781.6px;top:543px">116178</div><div class="t r " style="right:742.4px;top:543px">1</div><div class="t u" style="left:429.2px;top:543px">Wandspiegel</div><div class="t " style="left:122.3px;top:562px">Personal-WC</div><div class="t u" style="left:258.4px;top:562px">10032023</div><div class="t r " style="right:781.6px;top:562px">116179</div><div class="t r " style="right:742.4px;top:562px">1</div><div class="t u" style="left:429.2px;top:562px">Wasserarmatur</div><div class="t " style="left:600.2px;top:562px">Mischbatterie</div><div class="t " style="left:122.3px;top:581px">Personal-WC</div><div class="t u" style="left:258.4px;top:581px">10032026</div><div class="t r " style="right:781.6px;top:581px">116180</div><div class="t r " style="right:742.4px;top:581px">1</div><div class="t u" style="left:429.2px;top:581px">Waschbecken</div><div class="t " style="left:122.3px;top:599px">Personal-WC</div><div class="t u" style="left:258.4px;top:599px">10032029</div><div class="t r " style="right:781.6px;top:599px">116181</div><div class="t r " style="right:742.4px;top:599px">1</div><div class="t u" style="left:429.2px;top:599px">Spülkasten</div><div class="t " style="left:798.2px;top:599px">Dal</div><div class="t " style="left:122.3px;top:618px">Personal-WC</div><div class="t u" style="left:258.4px;top:618px">10032032</div><div class="t r " style="right:781.6px;top:618px">116182</div><div class="t r " style="right:742.4px;top:618px">1</div><div class="t u" style="left:429.2px;top:618px">WC-Becken</div><div class="t " style="left:600.2px;top:618px">mit Sitz</div><div class="t u" style="left:34.6px;top:636px">1000-1072-20</div><div class="t " style="left:122.3px;top:636px">Personal-WC</div><div class="t r " style="right:742.4px;top:636px">0</div><div class="t " style="left:122.3px;top:655px">Personal-WC</div><div class="t u" style="left:258.4px;top:655px">10031999</div><div class="t r " style="right:781.6px;top:655px">116171</div><div class="t r " style="right:742.4px;top:655px">1</div><div class="t u" style="left:429.2px;top:655px">Deckenaufbauleuchte</div><div class="t " style="left:122.3px;top:673px">Personal-WC</div><div class="t u" style="left:258.4px;top:673px">10032002</div><div class="t r " style="right:781.6px;top:673px">116172</div><div class="t r " style="right:742.4px;top:673px">1</div><div class="t u" style="left:429.2px;top:673px">Spülkasten</div><div class="t " style="left:798.2px;top:673px">Dal</div><div class="t " style="left:122.3px;top:692px">Personal-WC</div><div class="t u" style="left:258.4px;top:692px">10032005</div><div class="t r " style="right:781.6px;top:692px">116173</div><div class="t r " style="right:742.4px;top:692px">1</div><div class="t u" style="left:429.2px;top:692px">WC-Becken</div><div class="t " style="left:600.2px;top:692px">mit Sitz</div><div class="t " style="left:122.3px;top:710px">Personal-WC</div><div class="t u" style="left:258.4px;top:710px">10032008</div><div class="t r " style="right:781.6px;top:710px">116174</div><div class="t r " style="right:742.4px;top:710px">1</div><div class="t u" style="left:429.2px;top:710px">Wandspiegel</div><div class="t " style="left:122.3px;top:729px">Personal-WC</div><div class="t u" style="left:258.4px;top:729px">10032011</div><div class="t r " style="right:781.6px;top:729px">116175</div><div class="t r " style="right:742.4px;top:729px">1</div><div class="t u" style="left:429.2px;top:729px">Wasserarmatur</div><div class="t " style="left:600.2px;top:729px">Einhebelmischer</div><div class="t " style="left:122.3px;top:747px">Personal-WC</div><div class="t u" style="left:258.4px;top:747px">10032014</div><div class="t r " style="right:781.6px;top:747px">116176</div><div class="t r " style="right:742.4px;top:747px">1</div><div class="t u" style="left:429.2px;top:747px">Waschbecken</div><div class="t u" style="left:34.6px;top:766px">1000-1072-20</div><div class="t " style="left:122.3px;top:766px">Büro</div><div class="t r " style="right:742.4px;top:766px">0</div>
<div class="dot" style="left:110px;top:111px"></div><div class="dot" style="left:113px;top:111px"></div><div class="dot" style="left:116px;top:111px"></div><div class="dot" style="left:960px;top:186px"></div><div class="dot" style="left:963px;top:186px"></div><div class="dot" style="left:966px;top:186px"></div><div class="dot" style="left:110px;top:315px"></div><div class="dot" style="left:113px;top:315px"></div><div class="dot" style="left:116px;top:315px"></div><div class="dot" style="left:110px;top:427px"></div><div class="dot" style="left:113px;top:427px"></div><div class="dot" style="left:116px;top:427px"></div><div class="dot" style="left:789px;top:464px"></div><div class="dot" style="left:792px;top:464px"></div><div class="dot" style="left:795px;top:464px"></div><div class="dot" style="left:110px;top:519px"></div><div class="dot" style="left:113px;top:519px"></div><div class="dot" style="left:116px;top:519px"></div><div class="dot" style="left:110px;top:649px"></div><div class="dot" style="left:113px;top:649px"></div><div class="dot" style="left:116px;top:649px"></div><div class="dot" style="left:110px;top:779px"></div><div class="dot" style="left:113px;top:779px"></div><div class="dot" style="left:116px;top:779px"></div>
</div>
</body></html>
